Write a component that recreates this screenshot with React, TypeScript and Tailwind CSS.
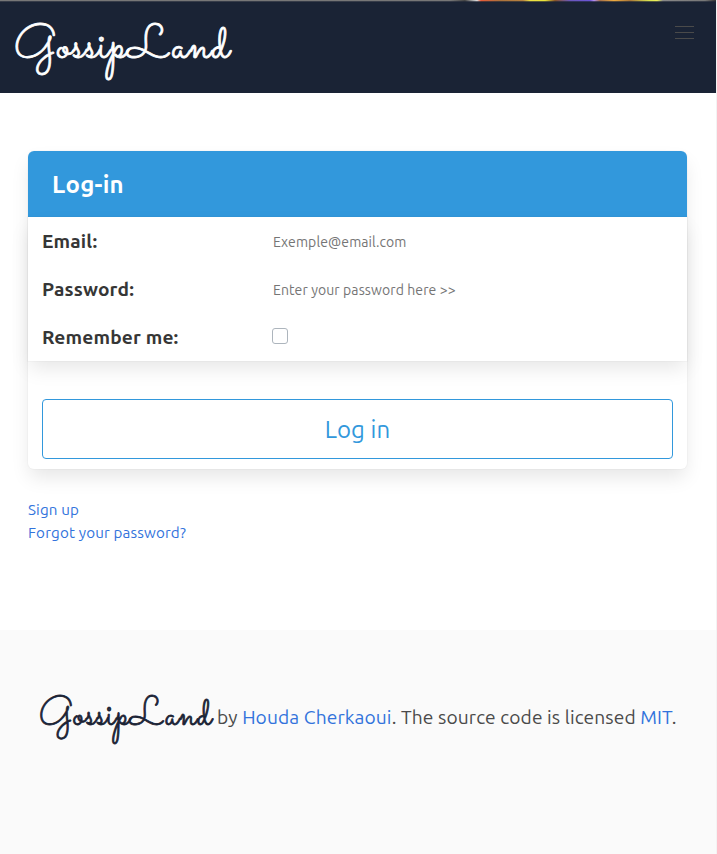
import React from "react";

const cardShadow =
  "shadow-[0_9.6px_19.2px_-2.4px_rgba(10,10,10,0.1),0_0_0_1px_rgba(10,10,10,0.02)]";

function Wordmark({ small = false }: { small?: boolean }) {
  return small ? (
    <span className="inline-block w-[174px] whitespace-nowrap font-['Sacramento','Lato',cursive] text-[38.4px] leading-none tracking-[0.75px] text-[#1a2335] [-webkit-text-stroke:0.8px_#1a2335]">
      GossipLand
    </span>
  ) : (
    <span className="inline-block w-[218px] whitespace-nowrap font-['Sacramento','Lato',cursive] text-[48px] leading-none tracking-[0.9px] text-white [-webkit-text-stroke:0.8px_white]">
      GossipLand
    </span>
  );
}

function Row({ label, children }: { label: string; children: React.ReactNode }) {
  return (
    <div className="flex h-12 items-center pl-[14px]">
      <label className="w-[230px] text-[19.2px] font-bold tracking-[0.15px] text-[#363636]">{label}</label>
      {children}
    </div>
  );
}

export default function App() {
  return (
    <div className="flex h-[854px] w-[717px] flex-col overflow-hidden border-r border-[#f3f3f3] bg-white font-['Ubuntu','Noto_Sans',sans-serif] text-[#4a4a4a]">
      <div className="h-[2px] w-full shrink-0 bg-[linear-gradient(#0000_50%,#1b2335b3_50%),linear-gradient(90deg,#777_0,#777_450px,#444_465px,#ddd_477px,#e75c38_481px,#ab713c_500px,#b6823f_523px,#eee044_530px,#e9e33b_545px,#875327_555px,#6b58bb_570px,#6c55d6_590px,#b48ff0_594px,#a46f4a_600px,#efab40_614px,#a97638_630px,#d9e250_649px,#eef05a_657px,#888_663px,#777_705px,#333_716px)]" />
      <header className="flex h-[91px] shrink-0 justify-between bg-[#1a2335]">
        <div className="pl-[14px] pt-[21px]">
          <Wordmark />
        </div>
        <button aria-label="menu" className="mr-[22px] mt-6 flex h-[13px] w-[19px] flex-col justify-between">
          <span className="h-px w-full bg-[#4a4a4a]" />
          <span className="h-px w-full bg-[#4a4a4a]" />
          <span className="h-px w-full bg-[#4a4a4a]" />
        </button>
      </header>

      <main className="h-[537px] shrink-0 px-7 pt-[58px]">
        <div className={`h-[318px] w-[659px] rounded-md bg-white ${cardShadow}`}>
          <div className="flex h-[66px] items-center rounded-t-md bg-[#3298dc] pl-6 pt-px text-[24px] font-bold tracking-[0.25px] text-white">
            Log-in
          </div>
          <form className={`h-36 bg-white ${cardShadow}`}>
            <Row label="Email:">
              <input
                className="ml-px mt-[2px] w-[360px] bg-transparent text-[14px] tracking-[0.1px] outline-none placeholder:text-[#757575]"
                placeholder="Exemple@email.com"
              />
            </Row>
            <Row label="Password:">
              <input
                className="ml-px mt-[2px] w-[360px] bg-transparent text-[14px] tracking-[0.1px] outline-none placeholder:text-[#757575]"
                placeholder="Enter your password here >>"
              />
            </Row>
            <Row label="Remember me:">
              <span className="mb-[2px] size-4 rounded-[3px] border border-[#adb5bd] bg-white" />
            </Row>
          </form>
          <div className="px-[14px] pt-[38px]">
            <button className="flex h-[60px] w-full items-center justify-center rounded border border-[#3298dc] bg-white pt-px text-[24px] tracking-[0.1px] text-[#3298dc]">
              Log in
            </button>
          </div>
        </div>
        <nav className="mt-[29px] flex flex-col text-[15.2px] leading-[23px] tracking-[0.15px] text-[#3273dc]">
          <a>Sign up</a>
          <a>Forgot your password?</a>
        </nav>
      </main>

      <footer className="flex-1 bg-[#fafafa] pl-[39px] pt-[67px]">
        <p className="flex items-baseline whitespace-nowrap text-[19.2px]">
          <Wordmark small />
          <span className="ml-[4px] tracking-[0.1px]">
            by <a className="text-[#3273dc]">Houda Cherkaoui</a>. The source code is licensed{" "}
            <a className="text-[#3273dc]">MIT</a>.
          </span>
        </p>
      </footer>
    </div>
  );
}
